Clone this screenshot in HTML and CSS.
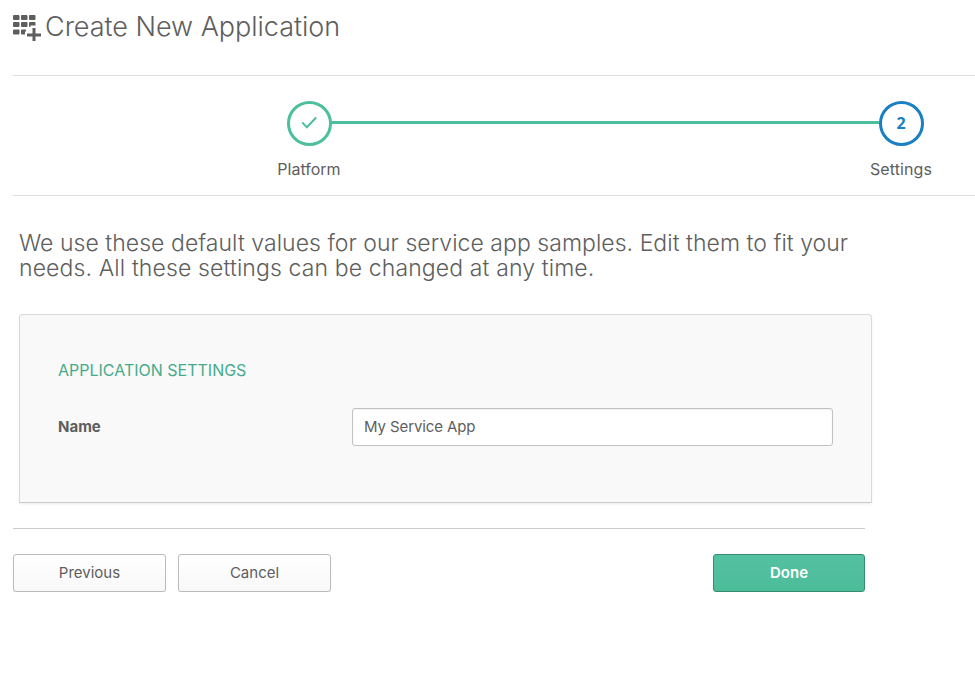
FILE: index.html
```html
<!DOCTYPE html>
<html lang="en">
<head>
<meta charset="utf-8">
<title>Create New Application</title>
<link rel="stylesheet" href="styles.css">
</head>
<body>
<header class="page-header">
  <svg class="app-icon" width="28" height="27" viewBox="0 0 28 27" fill="#5e5e5e" aria-hidden="true">
    <rect x="0" y="0" width="6.5" height="5" rx="1"/><rect x="8" y="0" width="6.5" height="5" rx="1"/><rect x="16" y="0" width="6.5" height="5" rx="1"/>
    <rect x="0" y="7" width="6.5" height="5" rx="1"/><rect x="8" y="7" width="6.5" height="5" rx="1"/><path d="M17 7h4.500q1 0 1 1v2.500H17.500v1.500H17q-1 0-1-1V8q0-1 1-1z"/>
    <rect x="0" y="14.500" width="6.500" height="5" rx="1"/><path d="M9 14.500h4v2h-1v3H9q-1 0-1-1v-3q0-1 1-1z"/>
    <path d="M19.500 13h3v5.500H28v3h-5.500V26h-3v-4.500H14v-3h5.500z"/>
  </svg>
  <h1 class="page-title">Create New Application</h1>
</header>
<nav class="steps">
  <div class="step">
    <div class="step-circle done"><svg width="17" height="14" viewBox="0 0 17 14" fill="none" stroke="#4cbf9c" stroke-width="2"><path d="M1.300 6.300L5.800 11.300L15.200 1.500"/></svg></div>
    <div class="step-label">Platform</div>
  </div>
  <div class="step-line"></div>
  <div class="step">
    <div class="step-circle current">2</div>
    <div class="step-label settings-label">Settings</div>
  </div>
</nav>
<main class="content">
  <div class="intro">
    <div class="intro-first">We use these default values for our service app samples. Edit them to fit your</div>
    <div class="intro-second">needs. All these settings can be changed at any time.</div>
  </div>
  <section class="panel">
    <h2 class="panel-title">APPLICATION SETTINGS</h2>
    <div class="field">
      <label class="field-label" for="name">Name</label>
      <input class="field-input" id="name" type="text" value="My Service App">
    </div>
  </section>
</main>
<footer class="actions">
  <button class="button">Previous</button>
  <button class="button">Cancel</button>
  <button class="button primary">Done</button>
</footer>
</body>
</html>
```
FILE: styles.css
```css
* { box-sizing: border-box; }
body {
  margin: 0;
  background: #fff;
  color: #5e5e5e;
  font: 400 16px/20px Inter, Roboto, sans-serif;
  overflow: hidden;
}
.page-header {
  display: flex;
  height: 76px;
  margin-left: 13px;
  border-bottom: 1px solid #ddd;
}
.app-icon { margin: 15px 4px 0 0; }
.page-title {
  margin: 11px 0 0;
  font-size: 27px;
  line-height: 32px;
  font-weight: 300;
  letter-spacing: -0.03px;
  white-space: nowrap;
}
.steps {
  display: flex;
  height: 120px;
  margin-left: 13px;
  padding: 25px 0 0 251px;
  border-bottom: 1px solid #ddd;
}
.step {
  width: 90px;
  display: flex;
  flex-direction: column;
  align-items: center;
  flex: none;
}
.step-circle {
  width: 45px;
  height: 45px;
  border: 3px solid #4cbf9c;
  border-radius: 50%;
  display: flex;
  align-items: center;
  justify-content: center;
}
.step-circle svg { margin-top: -2px; }
.step-circle.current {
  border-color: #1a7fc3;
  color: #1a7fc3;
  font: 700 16px/20px "Open Sans", sans-serif;
  padding-bottom: 1px;
}
.step-label { margin-top: 13px; }
.settings-label { letter-spacing: 0.1px; }
.step-line {
  flex: none;
  width: 548px;
  height: 3px;
  margin: 20px -23px 0;
  background: #4cbf9c;
}
.content { margin-left: 19px; }
.intro {
  margin: 35px 0 0;
  font-size: 23px;
  line-height: 25px;
  font-weight: 300;
  white-space: nowrap;
}
.intro-first { letter-spacing: 0.04px; }
.intro-second { letter-spacing: 0.12px; }
.panel {
  width: 853px;
  height: 189px;
  margin-top: 33px;
  padding: 45px 38px 0;
  background: #f9f9f9;
  border: 1px solid #d9d9d9;
  border-bottom-color: #ccc;
  border-radius: 4px 4px 1px 1px;
  box-shadow: 0 1px 2px rgba(0, 0, 0, .08);
}
.panel-title {
  margin: 0;
  color: #47ab8b;
  font-size: 16px;
  line-height: 20px;
  font-weight: 400;
}
.field {
  display: flex;
  align-items: center;
  justify-content: space-between;
  margin-top: 28px;
}
.field-label {
  padding-bottom: 1px;
  font-size: 15px;
  font-weight: 700;
}
.field-input {
  width: 481px;
  height: 38px;
  padding: 0 11px 1px;
  border: 1px solid #c1c1c1;
  border-radius: 3px;
  box-shadow: inset 0 1px 2px rgba(0, 0, 0, .06);
  color: #5e5e5e;
  font: 400 15px/20px Inter, Roboto, sans-serif;
  letter-spacing: -0.1px;
  background: #fff;
}
.actions {
  display: flex;
  gap: 12px;
  width: 852px;
  margin: 25px 0 0 13px;
  padding-top: 25px;
  border-top: 1px solid #ccc;
}
.button {
  width: 153px;
  height: 38px;
  padding: 0 0 1px;
  border: 1px solid #bbb;
  border-radius: 3px;
  background: linear-gradient(#fff, #f8f8f8);
  box-shadow: 0 1px 1px rgba(0, 0, 0, .13);
  color: #5e5e5e;
  font: 400 15px/20px Inter, Roboto, sans-serif;
}
.primary {
  width: 152px;
  margin-left: auto;
  background: linear-gradient(#54c2a0, #4cbc99);
  border-color: #368b70;
  color: #fff;
  font-weight: 600;
}
```
